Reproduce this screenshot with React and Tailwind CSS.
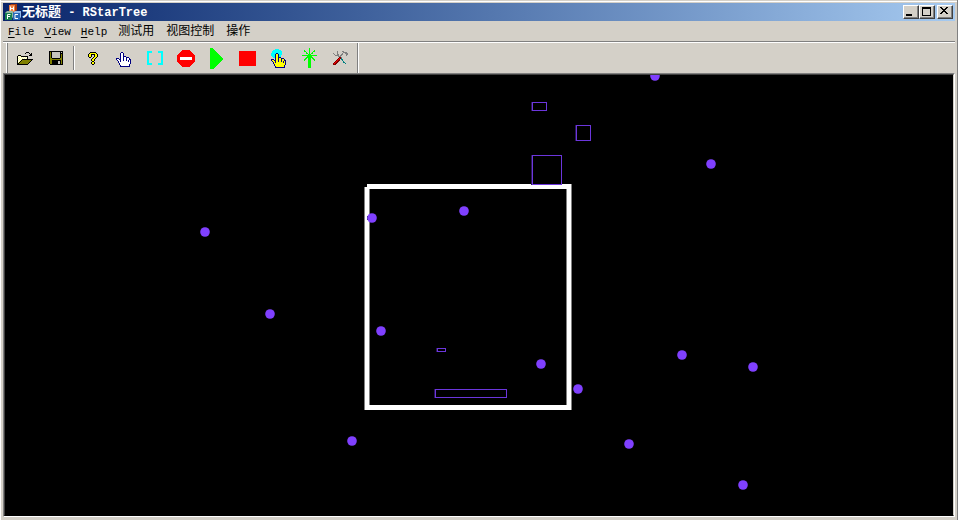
import React from "react";

const INK = {
  K: "#000000",
  W: "#ffffff",
  Y: "#ffff00",
  L: "#ffff99",
  O: "#808000",
  G: "#c6c3bc",
  B: "#000080",
  C: "#00ffff",
  R: "#ff0000",
  D: "#800000",
  S: "#808080",
  T: "#008080",
  N: "#00ff00",
};

function Bitmap({ rows }) {
  const width = Math.max(...rows.map((r) => r.length));
  return (
    <svg width={width} height={rows.length} shapeRendering="crispEdges" aria-hidden="true" className="block shrink-0">
      {rows.flatMap((row, y) =>
        [...row].map((c, x) =>
          INK[c] ? <rect key={x + "-" + y} x={x} y={y} width="1" height="1" fill={INK[c]} /> : null
        )
      )}
    </svg>
  );
}

const OPEN = [
  ".........KKK....",
  "........K...K.K.",
  ".............KK.",
  ".KKK........KKK.",
  "KLWLKKKKKKK.....",
  "KWLWLWLWLWK.....",
  "KLWLWLWLWLK.....",
  "KWLWLKKKKKKKKKKK",
  "KLWLKOOOOOOOOOK.",
  "KWLKOOOOOOOOOK..",
  "KLKOOOOOOOOOK...",
  "KKOOOOOOOOOK....",
  "KKKKKKKKKKK.....",
];

const SAVE = [
  "KKKKKKKKKKKKKK",
  "KOKGGGGGGGGKGK",
  "KOKGGGGGGGGKKK",
  "KOKGGGGGGGGKOK",
  "KOKGGGGGGGGKOK",
  "KOKGGGGGGGGKOK",
  "KOKGGGGGGGGKOK",
  "KOOKKKKKKKKOOK",
  "KOOOOOOOOOOOOK",
  "KOOKKKKKKKKKOK",
  "KOOKKKKKKGGKOK",
  "KOOKKKKKKGGKOK",
  "KOOKKKKKKGGKOK",
  ".KKKKKKKKKKKKK",
];

const HELP = [
  "..KKKKKK..",
  ".KYYYYYYK.",
  "KYYKKKKYYK",
  "KYYK..KYYK",
  "KYYK..KYYK",
  ".KK..KYYK.",
  "....KYYK..",
  "...KYYK...",
  "...KYYK...",
  "....KK....",
  "...KYYK...",
  "...KYYK...",
  "....KK....",
];

const HAND = [
  ".....BB.........",
  "....BWWB........",
  "....BWWB........",
  "....BWWB........",
  "....BWWBBB......",
  "....BWWBWWBBB...",
  "BBB.BWWBWWBWWB..",
  "BWWBBWWBWWBWWBB.",
  ".BWWBWWBWWBWBWB.",
  "..BWBWWWWWWWBWB.",
  "..BWWWWWWWWWWWB.",
  "...BWWWWWWWWWWB.",
  "...BWWWWWWWWWB..",
  "....BWWWWWWWWB..",
  "....BBBBBBBBBB..",
];

const PICK = [
  "....CCCC........",
  "..CCCCCCCC......",
  ".CCCCCCCCCC.....",
  ".CCCCCCCCCC.....",
  "CCCCCBBCCCC.....",
  "CCCCBYYBCCC.....",
  "CCCCBYYBCC......",
  ".CCCBYYBCC......",
  "..CCBYYBBB......",
  "....BYYBYYBBB...",
  "BBB.BYYBYYBYYB..",
  "BYYBBYYBYYBYYBB.",
  ".BYYBYYBYYBYBYB.",
  "..BYBYYYYYYYBYB.",
  "..BYYYYYYYYYYYB.",
  "...BYYYYYYYYYYB.",
  "...BYYYYYYYYYB..",
  "....BYYYYYYYYB..",
  "....BBBBBBBBBB..",
];

const BRACKETS = [
  "CCCCC......CCCCC",
  "CCCCC......CCCCC",
  "CC............CC",
  "CC............CC",
  "CC............CC",
  "CC............CC",
  "CC............CC",
  "CC............CC",
  "CC............CC",
  "CC............CC",
  "CC............CC",
  "CC............CC",
  "CCCCC......CCCCC",
  "CCCCC......CCCCC",
];

const STOP = [
  ".....RRRRRRRR.....",
  "....RRRRRRRRRR....",
  "...RRRRRRRRRRRR...",
  "..RRRRRRRRRRRRRR..",
  ".RRRRRRRRRRRRRRRR.",
  "RRRRRRRRRRRRRRRRRR",
  "RRRRRRRRRRRRRRRRRR",
  "RRRWWWWWWWWWWWWRRR",
  "RRRWWWWWWWWWWWWRRR",
  "RRRWWWWWWWWWWWWRRR",
  "RRRRRRRRRRRRRRRRRR",
  "RRRRRRRRRRRRRRRRRR",
  ".RRRRRRRRRRRRRRRR.",
  "..RRRRRRRRRRRRRR..",
  "...RRRRRRRRRRRR...",
  "....RRRRRRRRRR....",
  ".....RRRRRRRR.....",
];

const TREE = [
  ".......N.......",
  ".......N.......",
  "..N....N....N..",
  "..NN...N...NN..",
  "....N..N..N....",
  "....NN.N.NN....",
  "......NNN......",
  "NNNNNNNNNNNNNNN",
  ".....NNNNN.....",
  "....NNNNNNN....",
  "...NN.NNN.NN...",
  "..NN..NNN..NN..",
  "..N...NNN...N..",
  "......NNN......",
  "......NNN......",
  "......NNN......",
  "......NNN......",
  "......NNN......",
  "......NNN......",
  "......NNN......",
];

const TOOLS = [
  "....S....SS....",
  "....S.....SSSS.",
  "S...S....S..SSS",
  ".S..SS..SS...SS",
  "..SSSS.SS....S.",
  ".....SSS.......",
  "......DDS......",
  ".....DRDT......",
  "....DRD.TT.....",
  "...DRDD..T.....",
  "..DRDD....T....",
  ".DRDD.....TT...",
  "DRDD........T..",
  "DDD............",
];

const MINIMIZE = [
  "........",
  "........",
  "........",
  "........",
  "........",
  "........",
  "........",
  "KKKKKK..",
  "KKKKKK..",
];

const MAXIMIZE = [
  "KKKKKKKKK",
  "KKKKKKKKK",
  "K.......K",
  "K.......K",
  "K.......K",
  "K.......K",
  "K.......K",
  "K.......K",
  "KKKKKKKKK",
];

const CLOSE = [
  "KK....KK",
  ".KK..KK.",
  "..KKKK..",
  "...KK...",
  "..KKKK..",
  ".KK..KK.",
  "KK....KK",
  "........",
];

function Play() {
  return (
    <svg width="14" height="21" shapeRendering="crispEdges" aria-hidden="true" className="block shrink-0">
      <path d="M0 0h2l12 11L3 21H0z" fill="#00ff00" />
    </svg>
  );
}

function Square() {
  return (
    <svg width="17" height="15" shapeRendering="crispEdges" aria-hidden="true" className="block shrink-0">
      <rect width="17" height="15" fill="#ff0000" />
    </svg>
  );
}

function AppLogo() {
  return (
    <svg width="16" height="16" viewBox="0 0 16 16" aria-hidden="true" className="block shrink-0">
      <path d="M4 2l2-2h6v6l-2 2H4z" fill="#a83c10" />
      <rect x="4" y="1" width="6" height="7" fill="#f08040" />
      <path d="M5.500 2.500v4M8.500 2.500v4M5.500 4.500h3" stroke="#fff" />
      <path d="M0 9l2-2h6v6l-2 3H0z" fill="#90b8a0" />
      <rect x="0" y="9" width="7" height="7" fill="#188050" />
      <path d="M2.500 15v-4.500h3M2.500 12.500h2.500" stroke="#fff" fill="none" />
      <path d="M8 9l2-2h6v6l-2 3H8z" fill="#90b8e8" />
      <rect x="8" y="9" width="7" height="7" fill="#2868b8" />
      <path d="M13 10.500h-3v4h3" stroke="#fff" fill="none" />
    </svg>
  );
}

function CaptionButton({ label, rows }) {
  return (
    <button
      type="button"
      aria-label={label}
      className="flex h-[14px] w-4 items-center justify-center border border-t-white border-l-white border-r-[#404040] border-b-[#404040] bg-[#d4d0c8] pr-[2px] pb-[2px] shadow-[inset_-1px_-1px_0_#808080]"
    >
      <Bitmap rows={rows} />
    </button>
  );
}

function ToolButton({ label, children }) {
  return (
    <button type="button" aria-label={label} className="flex h-[31px] w-[31px] items-center justify-center pt-px">
      {children}
    </button>
  );
}

const latinMenus = ["File", "View", "Help"];
const chineseMenus = ["测试用", "视图控制", "操作"];

const points = [
  [650, 1], [706, 89], [459, 136], [367, 143], [200, 157], [265, 239], [376, 256], [536, 289],
  [573, 314], [677, 280], [748, 292], [347, 366], [624, 369], [738, 410],
];

const boxes = [
  [527, 27, 14, 8],
  [571, 50, 14, 15],
  [527, 80, 29, 29],
  [432, 273, 8, 3],
  [430, 314, 71, 8],
];

function Scene() {
  return (
    <svg role="img" aria-label="RStarTree" className="block h-full w-full">
      <g shapeRendering="crispEdges">
        <path d="M362 109h205v5h-205z M360 330h206v5h-206z" fill="#ffffff" />
        <path d="M360 112h5v223h-5z M562 109h5v226h-5z" fill="#ffffff" />
        <path d="M359 112h1v223h-1z M364 114h1v216h-1z M561 114h1v216h-1z M566 109h1v226h-1z" fill="#808080" />
        <rect x="362" y="141" width="2" height="4" fill="#101040" />
        {boxes.map(([x, y, w, h]) => (
          <g key={x + "-" + y}>
            <path d={`M${x - 1} ${y}h1v${h + 1}h-1z`} fill="#2c1858" />
            <path d={`M${x} ${y}h${w + 1}v${h + 1}h-${w + 1}z M${x + 1} ${y + 1}v${h - 1}h${w - 1}v-${h - 1}z`} fill="#6c36dc" />
          </g>
        ))}
      </g>
      {points.map(([x, y]) => (
        <circle key={x + "-" + y} cx={x} cy={y} r="4.8" fill="#8040ff" />
      ))}
    </svg>
  );
}

export default function App() {
  return (
    <div className="flex h-screen flex-col border-l border-r border-l-white border-r-[#808080] bg-[#d4d0c8] px-[2px] pb-[3px] font-['Liberation_Mono','Noto_Sans_CJK_SC',monospace] text-black">
      <div className="-mx-[2px] mt-px mb-px h-px bg-white" />
      <header className="flex h-[18px] shrink-0 items-center bg-linear-to-r from-[#0a246a] to-[#a6caf0] pr-[2px] pl-[2px]">
        <AppLogo />
        <h1 className="flex flex-1 items-center pt-[2px] pl-px font-bold whitespace-pre text-white">
          <span className="text-[13px] leading-4">无标题</span>
          <span className="text-[12px] leading-4"> - RStarTree</span>
        </h1>
        <div className="flex">
          <CaptionButton label="Minimize" rows={MINIMIZE} />
          <CaptionButton label="Maximize" rows={MAXIMIZE} />
        </div>
        <div className="ml-[2px]">
          <CaptionButton label="Close" rows={CLOSE} />
        </div>
      </header>

      <nav className="flex h-5 shrink-0 items-center pt-[2px]">
        {latinMenus.map((name) => (
          <button key={name} type="button" className="px-[5px] text-[11px] leading-[18px]">
            <span className="underline underline-offset-2">{name[0]}</span>
            {name.slice(1)}
          </button>
        ))}
        {chineseMenus.map((name) => (
          <button key={name} type="button" className="px-[6px] text-[12px] leading-[18px]">
            {name}
          </button>
        ))}
      </nav>

      <div role="toolbar" aria-label="Toolbar" className="flex h-8 shrink-0 items-stretch border-t border-[#808080] shadow-[inset_0_1px_0_#ffffff]">
        <div className="mt-px mr-px ml-[3px] w-[2px] border-r border-l border-r-[#808080] border-l-white" />
        <ToolButton label="Open"><Bitmap rows={OPEN} /></ToolButton>
        <ToolButton label="Save"><Bitmap rows={SAVE} /></ToolButton>
        <div className="mx-[2px] mt-1 mb-[3px] w-[2px] border-r border-l border-r-white border-l-[#808080]" />
        <ToolButton label="Help"><Bitmap rows={HELP} /></ToolButton>
        <ToolButton label="Hand"><div className="pt-[2px]"><Bitmap rows={HAND} /></div></ToolButton>
        <ToolButton label="Brackets"><Bitmap rows={BRACKETS} /></ToolButton>
        <ToolButton label="Stop"><Bitmap rows={STOP} /></ToolButton>
        <ToolButton label="Play"><Play /></ToolButton>
        <ToolButton label="Rectangle"><Square /></ToolButton>
        <ToolButton label="Pick"><Bitmap rows={PICK} /></ToolButton>
        <ToolButton label="Tree"><Bitmap rows={TREE} /></ToolButton>
        <ToolButton label="Tools"><Bitmap rows={TOOLS} /></ToolButton>
        <div className="mt-px ml-px w-[2px] border-r border-l border-r-white border-l-[#808080]" />
      </div>

      <main className="min-h-0 flex-1 border border-t-[#808080] border-r-white border-b-white border-l-[#808080]">
        <div className="h-full border border-t-[#404040] border-r-[#d4d0c8] border-b-black border-l-[#404040] bg-black">
          <Scene />
        </div>
      </main>
    </div>
  );
}
